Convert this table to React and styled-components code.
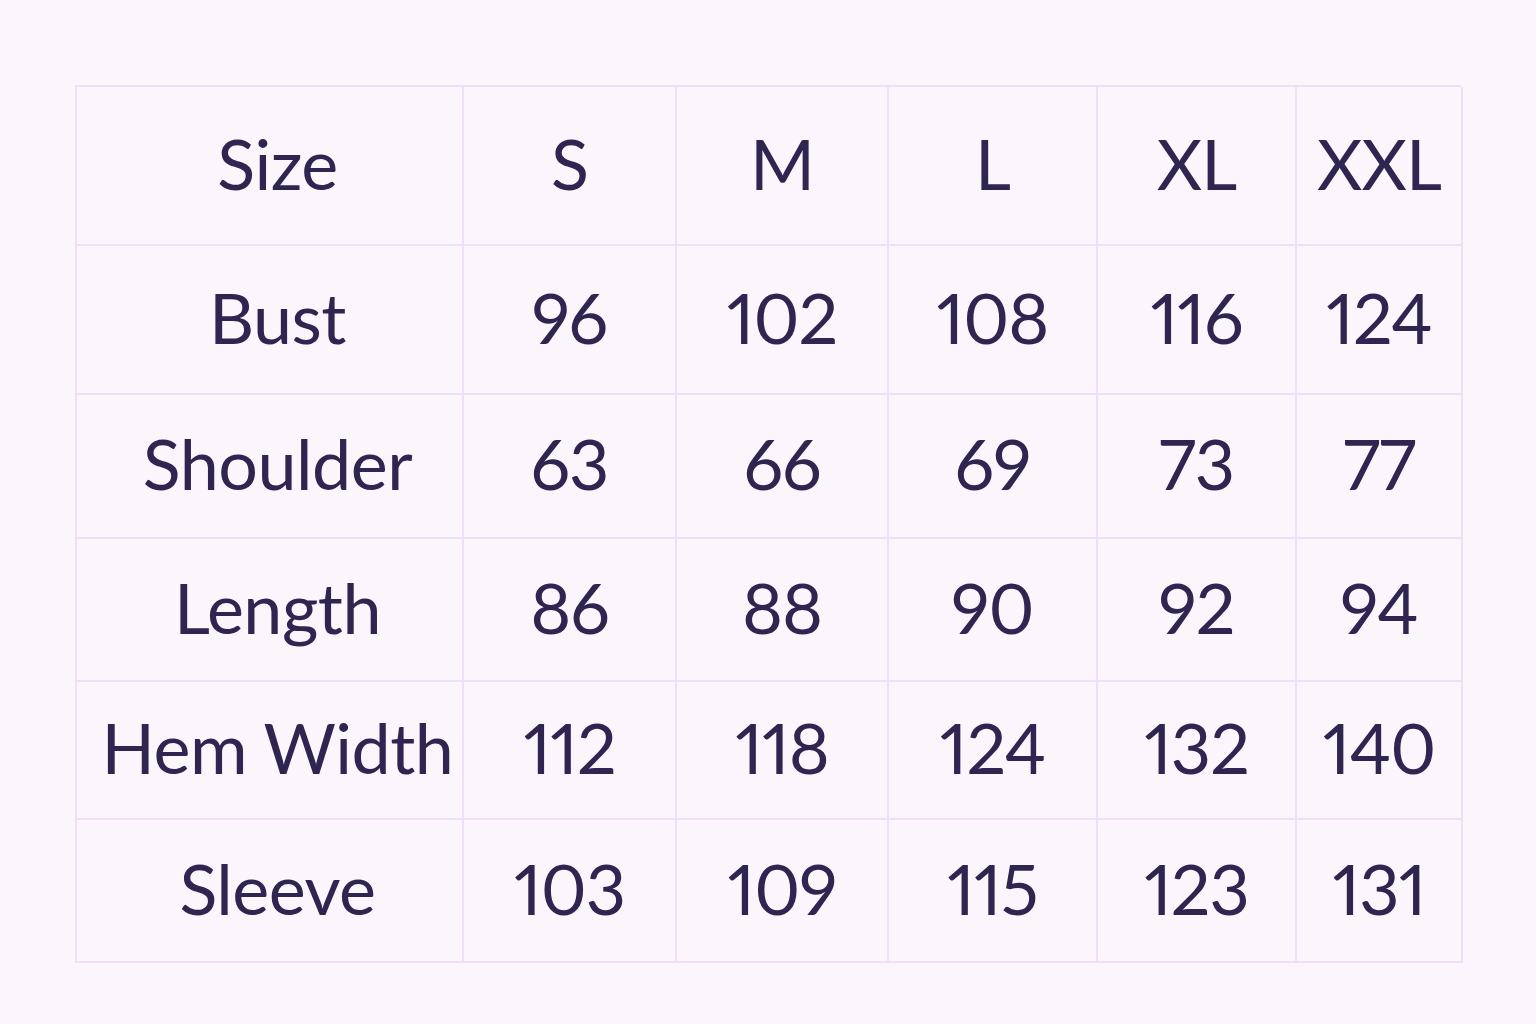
import React from "react";
import styled, { createGlobalStyle } from "styled-components";

const GlobalStyle = createGlobalStyle`
  html, body {
    margin: 0;
    padding: 0;
    background: #fbf6fc;
  }
  body {
    font-family: Lato, "Noto Sans", sans-serif;
    color: #2e2550;
  }
`;

const Page = styled.div`
  width: 1536px;
  height: 1024px;
  box-sizing: border-box;
  padding: 85px 0 0 75px;
`;

const Grid = styled.div`
  display: grid;
  grid-template-columns: 387px 213px 212px 209px 199px 166px;
  grid-template-rows: 159px 149px 144px 143px 138px 143px;
  width: 1386px;
  box-sizing: border-box;
  border-top: 2px solid #efdff8;
  border-left: 2px solid #efdff8;
`;

const Cell = styled.div`
  display: flex;
  align-items: center;
  justify-content: center;
  box-sizing: border-box;
  padding-bottom: 6px;
  padding-left: ${(p) => (p.$label ? "16px" : "0")};
  border-right: 2px solid #efdff8;
  border-bottom: 2px solid #efdff8;
  font-size: 70px;
  font-weight: 400;
  font-variant-numeric: proportional-nums;
  font-feature-settings: "pnum" 1;
  letter-spacing: ${(p) => (p.$label ? "-0.5px" : "-1px")};
  white-space: nowrap;
  color: #2e2550;
`;

const sizes = ["S", "M", "L", "XL", "XXL"];

const rows = [
  ["Bust", 96, 102, 108, 116, 124],
  ["Shoulder", 63, 66, 69, 73, 77],
  ["Length", 86, 88, 90, 92, 94],
  ["Hem Width", 112, 118, 124, 132, 140],
  ["Sleeve", 103, 109, 115, 123, 131],
];

export default function App() {
  return (
    <Page>
      <GlobalStyle />
      <Grid>
        <Cell $label>Size</Cell>
        {sizes.map((s) => (
          <Cell key={s}>{s}</Cell>
        ))}
        {rows.map((row) =>
          row.map((v, i) => (
            <Cell key={row[0] + i} $label={i === 0}>
              {v}
            </Cell>
          ))
        )}
      </Grid>
    </Page>
  );
}
